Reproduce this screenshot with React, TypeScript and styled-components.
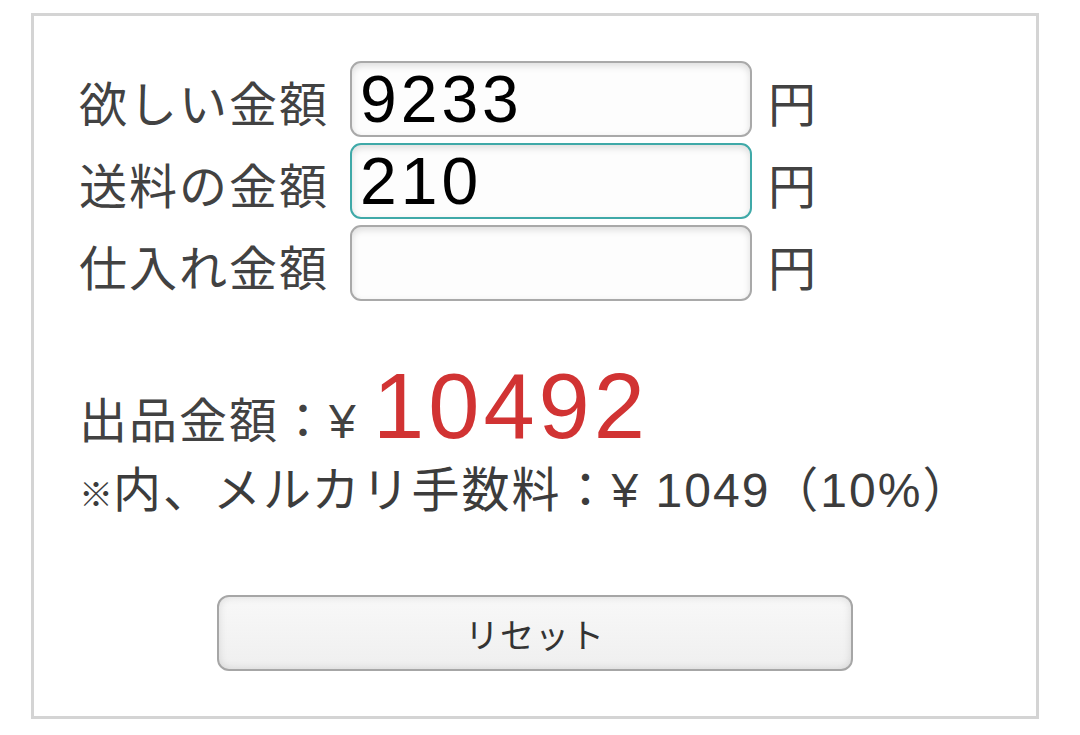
import React from "react"
import styled, { createGlobalStyle } from "styled-components"

const GlobalStyle = createGlobalStyle`
  body {
    margin: 0;
    background: #ffffff;
    font-family: "Liberation Sans", "Noto Sans CJK JP", sans-serif;
  }
`

const Page = styled.div`
  padding: 13px 0 0 31px;
`

const Card = styled.div`
  box-sizing: border-box;
  width: 1008px;
  height: 706px;
  border: 3px solid #d4d4d4;
  padding-top: 45px;
`

const Form = styled.div`
  padding-left: 45px;
  display: flex;
  flex-direction: column;
  gap: 6px;
`

const Row = styled.div`
  display: flex;
  align-items: center;
`

const Label = styled.span`
  box-sizing: border-box;
  width: 271px;
  padding-top: 14px;
  font-size: 48px;
  line-height: 1;
  letter-spacing: 2px;
  color: #424242;
  white-space: nowrap;
`

const Input = styled.input<{ $active?: boolean }>`
  box-sizing: border-box;
  width: 402px;
  height: 76px;
  border: 2px solid ${(p) => (p.$active ? "#3fa9a8" : "#a9a9a9")};
  border-radius: 11px;
  background: #fdfdfd;
  box-shadow: inset 0 3px 7px rgba(0, 0, 0, 0.13);
  padding: 0 0 0 8px;
  font-family: "Liberation Sans", sans-serif;
  font-size: 66px;
  letter-spacing: 4px;
  color: #000;
  outline: none;
`

const Unit = styled.span`
  margin-left: 16px;
  padding-top: 14px;
  font-size: 48px;
  line-height: 1;
  color: #424242;
`

const Result = styled.div`
  margin-top: 59px;
  padding-left: 45px;
  color: #424242;
`

const PriceLine = styled.div`
  display: flex;
  align-items: baseline;
  font-size: 48px;
  line-height: 1;
  letter-spacing: 2px;
`

const Price = styled.span`
  font-size: 92px;
  line-height: 1;
  letter-spacing: 4px;
  color: #d13333;
`

const FeeLine = styled.div`
  margin-top: 15px;
  font-size: 48px;
  line-height: 1;
  letter-spacing: 2px;
  white-space: nowrap;
  color: #3c3c3c;
`

const Mark = styled.span`
  font-size: 34px;
  font-weight: bold;
  letter-spacing: 0;
`

const Footer = styled.div`
  margin-top: 80px;
  display: flex;
  justify-content: center;
`

const ResetButton = styled.button`
  box-sizing: border-box;
  width: 636px;
  height: 76px;
  border: 2px solid #a6a6a6;
  border-radius: 12px;
  background: linear-gradient(#f8f8f8, #efefef);
  box-shadow: inset 0 0 8px rgba(0, 0, 0, 0.12);
  font-family: "Noto Sans CJK JP", sans-serif;
  font-size: 34px;
  letter-spacing: 1px;
  color: #333;
  cursor: pointer;
`

const fields = [
  { label: "欲しい金額", value: "9233" },
  { label: "送料の金額", value: "210", active: true },
  { label: "仕入れ金額", value: "" },
]

export default function App() {
  return (
    <Page>
      <GlobalStyle />
      <Card>
        <Form>
          {fields.map((f) => (
            <Row key={f.label}>
              <Label>{f.label}</Label>
              <Input type="text" defaultValue={f.value} $active={f.active} />
              <Unit>円</Unit>
            </Row>
          ))}
        </Form>
        <Result>
          <PriceLine>
            出品金額：¥&nbsp;<Price>10492</Price>
          </PriceLine>
          <FeeLine>
            <Mark>※</Mark>内、メルカリ手数料：¥ 1049（10%）
          </FeeLine>
        </Result>
        <Footer>
          <ResetButton type="button">リセット</ResetButton>
        </Footer>
      </Card>
    </Page>
  )
}
